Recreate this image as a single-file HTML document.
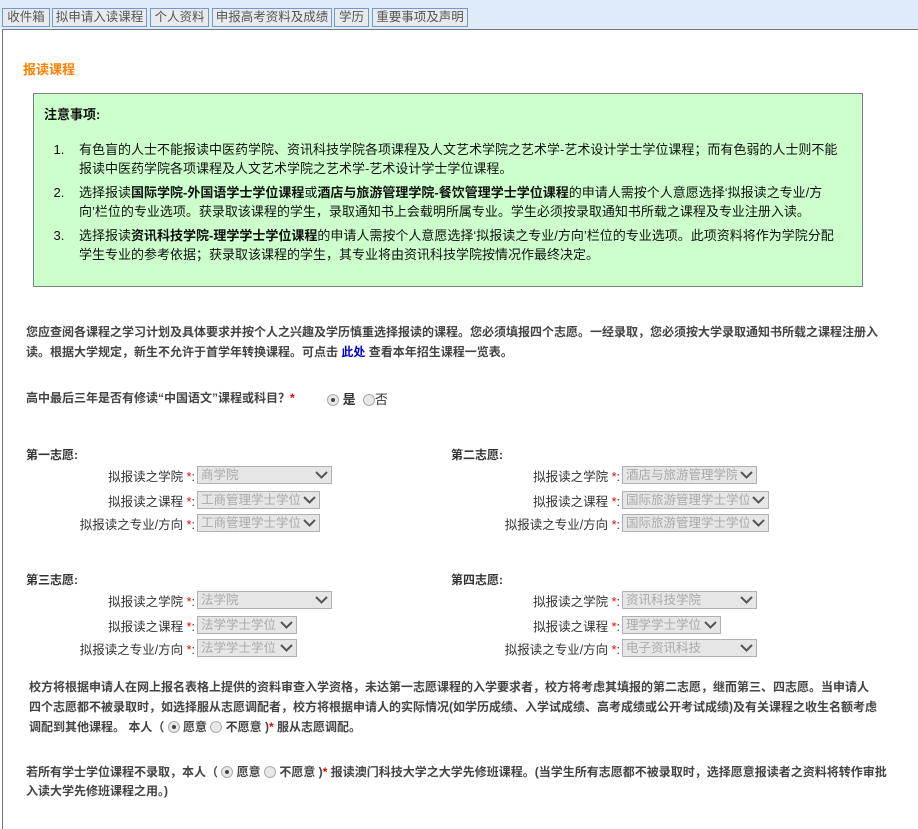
<!DOCTYPE html>
<html><head><meta charset="utf-8"><style>
*{margin:0;padding:0;box-sizing:border-box}
body{width:918px;height:814px;background:#fff;font-family:"Liberation Sans","Noto Sans CJK SC",sans-serif;font-size:12px;color:#333;position:relative;overflow:hidden}
.top{position:absolute;left:0;top:0;width:918px;height:29px;background:#dfebf9}
.tab{position:absolute;top:8px;height:19px;border:1px solid #6b9bd0;background:#e8ebee;color:#555;font-size:12.5px;line-height:17px;text-align:center}
.frame{position:absolute;left:2px;top:29px;width:930px;height:800px;border:1px solid #777;border-right:none;border-bottom:none}
.a{position:absolute;white-space:nowrap}
.b{font-weight:bold}
.red{color:#e00}
.green{position:absolute;left:33px;top:93px;width:830px;height:194px;background:#ccffcc;border:1px solid #808080;color:#111;font-size:13px}
.green ol{position:absolute;left:4px;top:46px;width:800px;padding-left:30px}
.green li{line-height:19px;margin-bottom:5px;padding-left:11px}
.sel{position:absolute;height:18px;border:1px solid #b0b0b0;background:#e6e6e6;color:#aaa;font-size:12.5px;line-height:16px;padding-left:3px;white-space:nowrap;overflow:hidden}
.sel svg{position:absolute;right:0;top:0;width:19px;height:16px;background:#e6e6e6}
.lbl{position:absolute;text-align:right;font-size:12.5px;color:#333;white-space:nowrap}
.rad{display:inline-block;width:12px;height:12px;border:1px solid #aaa;border-radius:50%;background:#e8e8e8;vertical-align:-2px;position:relative}
.rad.on::after{content:"";position:absolute;left:3px;top:3px;width:4px;height:4px;border-radius:50%;background:#444}
.p{position:absolute;font-weight:bold;color:#444;font-size:12px;line-height:20px}
</style></head><body>
<div class="top"></div>
<div class="tab" style="left:2px;width:48px">收件箱</div>
<div class="tab" style="left:52px;width:95px">拟申请入读课程</div>
<div class="tab" style="left:150px;width:59px">个人资料</div>
<div class="tab" style="left:212px;width:120px">申报高考资料及成绩</div>
<div class="tab" style="left:334px;width:35px">学历</div>
<div class="tab" style="left:372px;width:96px">重要事项及声明</div>
<div class="frame"></div>
<div class="a b" style="left:23px;top:59px;color:#ff7f00;font-size:13px">报读课程</div>
<div class="green">
<div class="a b" style="left:10px;top:10px;font-size:13px">注意事项:</div>
<ol>
<li>有色盲的人士不能报读中医药学院、资讯科技学院各项课程及人文艺术学院之艺术学-艺术设计学士学位课程；而有色弱的人士则不能报读中医药学院各项课程及人文艺术学院之艺术学-艺术设计学士学位课程。</li>
<li>选择报读<b>国际学院-外国语学士学位课程</b>或<b>酒店与旅游管理学院-餐饮管理学士学位课程</b>的申请人需按个人意愿选择‘拟报读之专业/方向’栏位的专业选项。获录取该课程的学生，录取通知书上会载明所属专业。学生必须按录取通知书所载之课程及专业注册入读。</li>
<li>选择报读<b>资讯科技学院-理学学士学位课程</b>的申请人需按个人意愿选择‘拟报读之专业/方向’栏位的专业选项。此项资料将作为学院分配学生专业的参考依据；获录取该课程的学生，其专业将由资讯科技学院按情况作最终决定。</li>
</ol>
</div>
<div class="p" style="left:26px;top:322px;width:870px">您应查阅各课程之学习计划及具体要求并按个人之兴趣及学历慎重选择报读的课程。您必须填报四个志愿。一经录取，您必须按大学录取通知书所载之课程注册入读。根据大学规定，新生不允许于首学年转换课程。可点击 <span style="color:#00c;text-decoration:none">此处</span> 查看本年招生课程一览表。</div>
<div class="a b" style="left:26px;top:389px;color:#444">高中最后三年是否有修读“中国语文”课程或科目？<span class="red">*</span></div>
<div class="a" style="left:327px;top:389px;font-size:13px"><span class="rad on"></span> <b>是</b> &nbsp;<span class="rad"></span>否</div>

<div class="a b" style="left:26px;top:446px">第一志愿:</div>
<div class="a b" style="left:451px;top:446px">第二志愿:</div>
<div class="a b" style="left:26px;top:571px">第三志愿:</div>
<div class="a b" style="left:451px;top:571px">第四志愿:</div>

<div class="lbl" style="right:723px;top:466px">拟报读之学院 <span class="red">*</span>:</div>
<div class="lbl" style="right:723px;top:491px">拟报读之课程 <span class="red">*</span>:</div>
<div class="lbl" style="right:723px;top:514px">拟报读之专业/方向 <span class="red">*</span>:</div>
<div class="lbl" style="right:298px;top:466px">拟报读之学院 <span class="red">*</span>:</div>
<div class="lbl" style="right:298px;top:491px">拟报读之课程 <span class="red">*</span>:</div>
<div class="lbl" style="right:298px;top:514px">拟报读之专业/方向 <span class="red">*</span>:</div>
<div class="lbl" style="right:723px;top:591px">拟报读之学院 <span class="red">*</span>:</div>
<div class="lbl" style="right:723px;top:616px">拟报读之课程 <span class="red">*</span>:</div>
<div class="lbl" style="right:723px;top:639px">拟报读之专业/方向 <span class="red">*</span>:</div>
<div class="lbl" style="right:298px;top:591px">拟报读之学院 <span class="red">*</span>:</div>
<div class="lbl" style="right:298px;top:616px">拟报读之课程 <span class="red">*</span>:</div>
<div class="lbl" style="right:298px;top:639px">拟报读之专业/方向 <span class="red">*</span>:</div>

<div class="sel" style="left:197px;top:466px;width:135px">商学院<svg viewBox="0 0 19 16"><path d="M4 5L9.5 10.5L15 5" stroke="#555" stroke-width="2" fill="none"/></svg></div>
<div class="sel" style="left:197px;top:491px;width:123px">工商管理学士学位<svg viewBox="0 0 19 16"><path d="M4 5L9.5 10.5L15 5" stroke="#555" stroke-width="2" fill="none"/></svg></div>
<div class="sel" style="left:197px;top:514px;width:123px">工商管理学士学位<svg viewBox="0 0 19 16"><path d="M4 5L9.5 10.5L15 5" stroke="#555" stroke-width="2" fill="none"/></svg></div>
<div class="sel" style="left:622px;top:466px;width:135px">酒店与旅游管理学院<svg viewBox="0 0 19 16"><path d="M4 5L9.5 10.5L15 5" stroke="#555" stroke-width="2" fill="none"/></svg></div>
<div class="sel" style="left:622px;top:491px;width:147px">国际旅游管理学士学位<svg viewBox="0 0 19 16"><path d="M4 5L9.5 10.5L15 5" stroke="#555" stroke-width="2" fill="none"/></svg></div>
<div class="sel" style="left:622px;top:514px;width:147px">国际旅游管理学士学位<svg viewBox="0 0 19 16"><path d="M4 5L9.5 10.5L15 5" stroke="#555" stroke-width="2" fill="none"/></svg></div>
<div class="sel" style="left:197px;top:591px;width:135px">法学院<svg viewBox="0 0 19 16"><path d="M4 5L9.5 10.5L15 5" stroke="#555" stroke-width="2" fill="none"/></svg></div>
<div class="sel" style="left:197px;top:616px;width:100px">法学学士学位<svg viewBox="0 0 19 16"><path d="M4 5L9.5 10.5L15 5" stroke="#555" stroke-width="2" fill="none"/></svg></div>
<div class="sel" style="left:197px;top:639px;width:100px">法学学士学位<svg viewBox="0 0 19 16"><path d="M4 5L9.5 10.5L15 5" stroke="#555" stroke-width="2" fill="none"/></svg></div>
<div class="sel" style="left:622px;top:591px;width:135px">资讯科技学院<svg viewBox="0 0 19 16"><path d="M4 5L9.5 10.5L15 5" stroke="#555" stroke-width="2" fill="none"/></svg></div>
<div class="sel" style="left:622px;top:616px;width:99px">理学学士学位<svg viewBox="0 0 19 16"><path d="M4 5L9.5 10.5L15 5" stroke="#555" stroke-width="2" fill="none"/></svg></div>
<div class="sel" style="left:622px;top:639px;width:135px">电子资讯科技<svg viewBox="0 0 19 16"><path d="M4 5L9.5 10.5L15 5" stroke="#555" stroke-width="2" fill="none"/></svg></div>

<div class="p" style="left:29px;top:677px;width:850px;line-height:20px">校方将根据申请人在网上报名表格上提供的资料审查入学资格，未达第一志愿课程的入学要求者，校方将考虑其填报的第二志愿，继而第三、四志愿。当申请人四个志愿都不被录取时，如选择服从志愿调配者，校方将根据申请人的实际情况(如学历成绩、入学试成绩、高考成绩或公开考试成绩)及有关课程之收生名额考虑调配到其他课程。 本人（ <span class="rad on"></span> 愿意 <span class="rad"></span> 不愿意 )<span class="red">*</span> 服从志愿调配。</div>
<div class="p" style="left:26px;top:763px;width:870px;line-height:19px">若所有学士学位课程不录取，本人（ <span class="rad on"></span> 愿意 <span class="rad"></span> 不愿意 )<span class="red">*</span> 报读澳门科技大学之大学先修班课程。(当学生所有志愿都不被录取时，选择愿意报读者之资料将转作审批入读大学先修班课程之用。)</div>
</body></html>
